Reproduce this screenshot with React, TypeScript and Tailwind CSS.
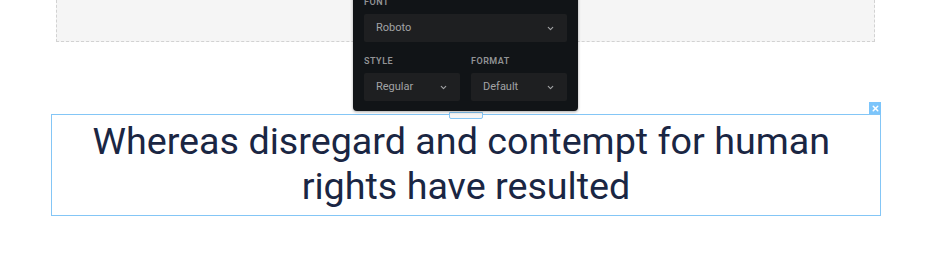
import { ChevronDown, X } from 'lucide-react';

function Select({ label, className }: { label: string; className?: string }) {
  return (
    <div
      className={`flex items-center justify-between h-[28px] rounded-[2px] bg-[#1e1f21] pl-[12px] pr-[12px] ${className ?? ''}`}
    >
      <span className="text-[11px] text-[#a2a3a5]">{label}</span>
      <ChevronDown size={9} strokeWidth={3} className="text-[#a2a3a5]" />
    </div>
  );
}

export default function App() {
  return (
    <div
      className="relative w-[936px] h-[268px] bg-white overflow-hidden"
      style={{ fontFamily: 'Roboto, "Liberation Sans", sans-serif' }}
    >
      {/* placeholder block above */}
      <div className="ml-[56px] w-[819px] h-[42px] bg-[#f5f5f5] border-x border-b border-dashed border-[#d2d2d2]" />

      {/* selected text block */}
      <div className="relative mt-[72px] ml-[51px] w-[830px] h-[102px] border border-[#84c6f6]">
        <p className="pt-[4px] px-[30px] text-center text-[37.7px] leading-[45px] text-[#1a2643] whitespace-break-spaces">
          Whereas disregard and contempt for human rights have resulted
        </p>
        <div className="absolute left-1/2 -translate-x-1/2 top-[-3px] w-[34px] h-[7px] bg-[#f6f6f6] border border-[#84c6f6] rounded-b-[2px]" />
        <div className="absolute right-[-1px] top-[-13px] w-[12px] h-[12px] bg-[#7cc5fb] flex items-center justify-center">
          <X size={9} strokeWidth={4} className="text-white" />
        </div>
      </div>

      {/* font toolbar popover */}
      <div className="absolute left-[353px] top-[-13px] w-[225px] rounded-[4px] bg-[#111417] px-[11px] pt-[10px] pb-[10px] shadow-[0_1px_3px_rgba(0,0,0,0.35)]">
        <div className="text-[9px] font-semibold tracking-[0.5px] text-[#929395] leading-[10px] mb-[7px]">FONT</div>
        <Select label="Roboto" />
        <div className="flex gap-[11px] mt-[14px]">
          <div className="flex-1">
            <div className="text-[9px] font-semibold tracking-[0.5px] text-[#929395] leading-[10px] mb-[7px]">STYLE</div>
            <Select label="Regular" />
          </div>
          <div className="flex-1">
            <div className="text-[9px] font-semibold tracking-[0.5px] text-[#929395] leading-[10px] mb-[7px]">FORMAT</div>
            <Select label="Default" />
          </div>
        </div>
      </div>
    </div>
  );
}
